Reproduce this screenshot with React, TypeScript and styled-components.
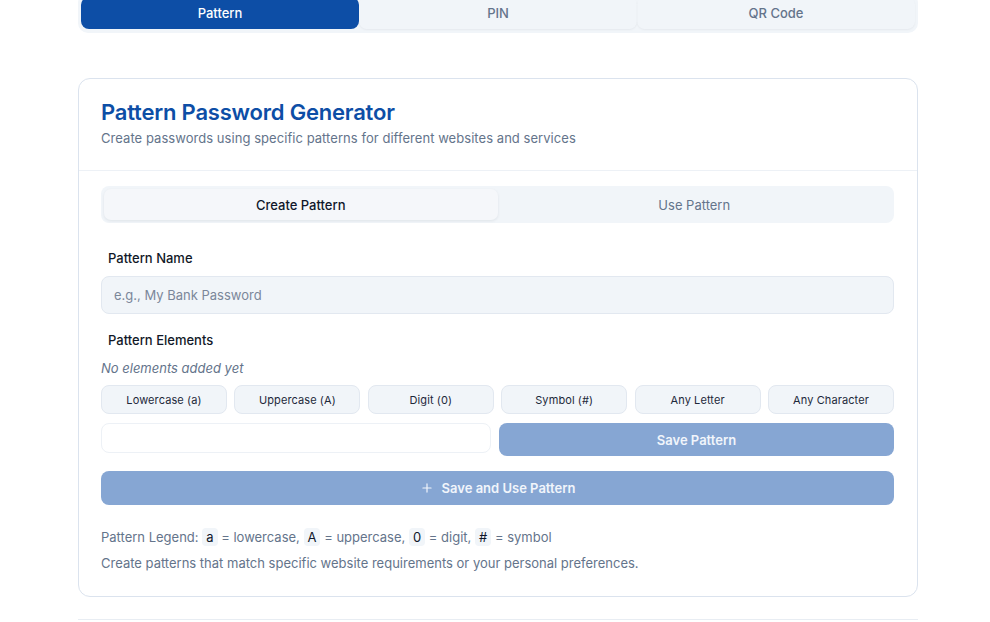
import React from "react";
import styled, { createGlobalStyle } from "styled-components";

const Global = createGlobalStyle`
  html, body { margin: 0; padding: 0; background: #ffffff; overflow: hidden; }
  body { font-family: Inter, "Noto Sans", "Liberation Sans", sans-serif; -webkit-font-smoothing: antialiased; }
  * { box-sizing: border-box; }
`;

const Page = styled.div`
  width: 840px;
  margin: -7px 0 0 78px;
  display: flex;
  flex-direction: column;
`;

const ModeBar = styled.div`
  display: grid;
  grid-template-columns: repeat(3, 1fr);
  padding: 4px 3px;
  background: #f1f5f9;
  border-radius: 10px;
  height: 40px;
`;

const ModeTab = styled.div<{ $active?: boolean }>`
  display: flex;
  align-items: center;
  justify-content: center;
  font-size: 13px;
  font-weight: 500;
  border-radius: 8px;
  color: ${(p) => (p.$active ? "#ffffff" : "#64748b")};
  background: ${(p) => (p.$active ? "#0d4ea6" : "transparent")};
  box-shadow: ${(p) => (p.$active ? "none" : "0 1px 2px rgba(15,23,42,0.05)")};
`;

const Card = styled.section`
  margin-top: 45px;
  border: 1px solid #dbe3ee;
  border-radius: 12px;
  background: #fff;
`;

const CardHeader = styled.header`
  padding: 19px 22px 23px;
  border-bottom: 1px solid #edf1f6;
`;

const Title = styled.h1`
  margin: 0;
  font-size: 22px;
  line-height: 28px;
  font-weight: 600;
  color: #0d4ea6;
  letter-spacing: -0.2px;
`;

const Subtitle = styled.p`
  margin: 3px 0 0;
  font-size: 13px;
  line-height: 18px;
  color: #64748b;
  letter-spacing: 0.05px;
`;

const CardBody = styled.div`
  padding: 15px 23px 24px 22px;
  display: flex;
  flex-direction: column;
`;

const SubTabs = styled.div`
  display: grid;
  grid-template-columns: 1fr 1fr;
  padding: 3px;
  height: 37px;
  background: #f1f5f9;
  border-radius: 8px;
`;

const SubTab = styled.div<{ $active?: boolean }>`
  display: flex;
  align-items: center;
  justify-content: center;
  font-size: 13px;
  font-weight: ${(p) => (p.$active ? 500 : 400)};
  border-radius: 7px;
  color: ${(p) => (p.$active ? "#0f172a" : "#64748b")};
  background: ${(p) => (p.$active ? "#f5f7fa" : "transparent")};
  box-shadow: ${(p) => (p.$active ? "0 1px 3px rgba(15,23,42,0.08)" : "none")};
`;

const Label = styled.div<{ $top: number }>`
  margin-top: ${(p) => p.$top}px;
  padding-left: 7px;
  font-size: 13px;
  line-height: 18px;
  font-weight: 500;
  color: #111827;
`;

const NameInput = styled.input`
  margin-top: 9px;
  height: 38px;
  width: 100%;
  border: 1px solid #e2e8f0;
  border-radius: 8px;
  background: #f1f5f9;
  padding: 0 12px;
  font-family: inherit;
  font-size: 13px;
  color: #0f172a;
  outline: none;
  &::placeholder { color: #7b8799; }
`;

const Empty = styled.div`
  margin-top: 10px;
  font-size: 13px;
  line-height: 18px;
  font-style: italic;
  color: #64748b;
`;

const ElementGrid = styled.div`
  margin-top: 8px;
  display: grid;
  grid-template-columns: repeat(6, 1fr);
  gap: 7.5px;
`;

const ElementButton = styled.button`
  height: 29px;
  border: 1px solid #e2e8f0;
  border-radius: 8px;
  background: #f1f5f9;
  font-family: inherit;
  font-size: 11px;
  font-weight: 400;
  letter-spacing: 0.1px;
  color: #1e293b;
  cursor: pointer;
`;

const SaveRow = styled.div`
  margin-top: 9px;
  display: grid;
  grid-template-columns: 390px 1fr;
  gap: 8px;
  align-items: start;
`;

const PreviewInput = styled.input`
  height: 30px;
  border: 1px solid #edf1f6;
  border-radius: 8px;
  background: #fff;
  outline: none;
`;

const PrimaryButton = styled.button<{ $h: number }>`
  height: ${(p) => p.$h}px;
  width: 100%;
  border: none;
  border-radius: 8px;
  background: #86a6d3;
  color: #f1f5fb;
  font-family: inherit;
  font-size: 13px;
  font-weight: 600;
  display: flex;
  align-items: center;
  justify-content: center;
  gap: 8px;
`;

const WideButton = styled(PrimaryButton)`
  margin-top: 15px;
`;

const Legend = styled.p`
  margin: 23px 0 0;
  font-size: 13px;
  line-height: 18px;
  color: #64748b;
`;

const Code = styled.code`
  font-family: Inter, "Noto Sans", sans-serif;
  font-size: 13px;
  background: #f1f5f9;
  color: #0f172a;
  padding: 1px 4px;
  border-radius: 4px;
`;

const Note = styled.p`
  margin: 8px 0 0;
  font-size: 13px;
  line-height: 18px;
  color: #64748b;
`;

const NextCard = styled.div`
  margin-top: 22px;
  height: 40px;
  border-top: 1px solid #e8edf3;
`;

const PlusIcon = () => (
  <svg width="14" height="14" viewBox="0 0 24 24" fill="none" stroke="currentColor" strokeWidth="2" strokeLinecap="round">
    <path d="M12 5v14M5 12h14" />
  </svg>
);

export default function App() {
  const elements = ["Lowercase (a)", "Uppercase (A)", "Digit (0)", "Symbol (#)", "Any Letter", "Any Character"];
  return (
    <>
      <Global />
      <Page>
        <ModeBar>
          <ModeTab $active>Pattern</ModeTab>
          <ModeTab>PIN</ModeTab>
          <ModeTab>QR Code</ModeTab>
        </ModeBar>
        <Card>
          <CardHeader>
            <Title>Pattern Password Generator</Title>
            <Subtitle>Create passwords using specific patterns for different websites and services</Subtitle>
          </CardHeader>
          <CardBody>
            <SubTabs>
              <SubTab $active>Create Pattern</SubTab>
              <SubTab>Use Pattern</SubTab>
            </SubTabs>
            <Label $top={26}>Pattern Name</Label>
            <NameInput placeholder="e.g., My Bank Password" />
            <Label $top={17}>Pattern Elements</Label>
            <Empty>No elements added yet</Empty>
            <ElementGrid>
              {elements.map((e) => (
                <ElementButton key={e}>{e}</ElementButton>
              ))}
            </ElementGrid>
            <SaveRow>
              <PreviewInput />
              <PrimaryButton $h={33}>Save Pattern</PrimaryButton>
            </SaveRow>
            <WideButton $h={34}>
              <PlusIcon />
              Save and Use Pattern
            </WideButton>
            <Legend>
              Pattern Legend: <Code>a</Code> = lowercase, <Code>A</Code> = uppercase, <Code>0</Code> = digit,{" "}
              <Code>#</Code> = symbol
            </Legend>
            <Note>Create patterns that match specific website requirements or your personal preferences.</Note>
          </CardBody>
        </Card>
        <NextCard />
      </Page>
    </>
  );
}
